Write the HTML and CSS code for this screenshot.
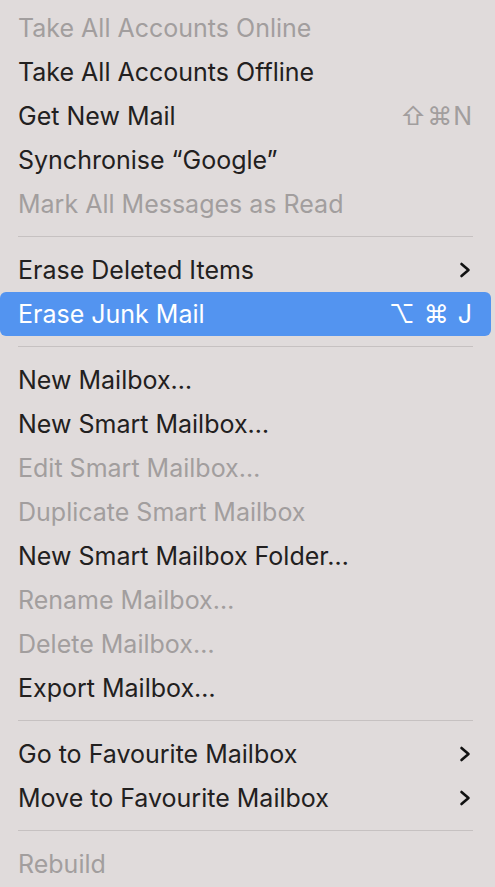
FILE: index.html
```html
<!DOCTYPE html>
<html lang="en">

<head>
    <meta charset="UTF-8">
    <meta name="viewport" content="width=device-width, initial-scale=1.0">
    <title>Mailbox menu</title>
    <link rel="stylesheet" href="styles.css">
</head>

<body>
    <div class="menu">
        <div class="item disabled"><span class="label">Take All Accounts Online</span></div>
        <div class="item"><span class="label">Take All Accounts Offline</span></div>
        <div class="item">
            <span class="label">Get New Mail</span>
            <span class="keys dim">⇧⌘N</span>
        </div>
        <div class="item"><span class="label">Synchronise “Google”</span></div>
        <div class="item disabled"><span class="label">Mark All Messages as Read</span></div>

        <div class="sep"></div>

        <div class="item">
            <span class="label">Erase Deleted Items</span>
            <svg class="chev" viewBox="0 0 12 16" width="12" height="16">
                <path d="M2.5 2 L9.5 8 L2.5 14" fill="none" stroke="currentColor" stroke-width="2.6" stroke-linecap="round" stroke-linejoin="round" />
            </svg>
        </div>
        <div class="item active">
            <span class="label">Erase Junk Mail</span>
            <span class="keys">⌥ ⌘ J</span>
        </div>

        <div class="sep"></div>

        <div class="item"><span class="label">New Mailbox…</span></div>
        <div class="item"><span class="label">New Smart Mailbox…</span></div>
        <div class="item disabled"><span class="label">Edit Smart Mailbox…</span></div>
        <div class="item disabled"><span class="label">Duplicate Smart Mailbox</span></div>
        <div class="item"><span class="label">New Smart Mailbox Folder…</span></div>
        <div class="item disabled"><span class="label">Rename Mailbox…</span></div>
        <div class="item disabled"><span class="label">Delete Mailbox…</span></div>
        <div class="item"><span class="label">Export Mailbox…</span></div>

        <div class="sep"></div>

        <div class="item">
            <span class="label">Go to Favourite Mailbox</span>
            <svg class="chev" viewBox="0 0 12 16" width="12" height="16">
                <path d="M2.5 2 L9.5 8 L2.5 14" fill="none" stroke="currentColor" stroke-width="2.6" stroke-linecap="round" stroke-linejoin="round" />
            </svg>
        </div>
        <div class="item">
            <span class="label">Move to Favourite Mailbox</span>
            <svg class="chev" viewBox="0 0 12 16" width="12" height="16">
                <path d="M2.5 2 L9.5 8 L2.5 14" fill="none" stroke="currentColor" stroke-width="2.6" stroke-linecap="round" stroke-linejoin="round" />
            </svg>
        </div>

        <div class="sep"></div>

        <div class="item disabled"><span class="label">Rebuild</span></div>
    </div>
</body>

</html>
```

FILE: styles.css
```css
html,
body {
    margin: 0;
    background-color: #e0dbdb;
}

body {
    font-family: Inter, "Noto Sans", sans-serif;
    font-size: 25px;
    color: #222020;
}

.menu {
    padding: 6px 4px 0 0;
}

.item {
    height: 44px;
    display: flex;
    align-items: center;
    justify-content: space-between;
    padding: 0 18px 0 18px;
    border-radius: 6px;
}

.item.disabled {
    color: #a29e9e;
}

.item.active {
    background-color: #5394f0;
    color: #ffffff;
}

.keys {
    font-size: 25px;
    letter-spacing: 1px;
}

.keys.dim {
    color: #a29e9e;
}

.chev {
    color: #111;
    margin-right: 2px;
}

.sep {
    height: 1px;
    margin: 10px 18px 11px 18px;
    background-color: #c6c1c1;
}
```
